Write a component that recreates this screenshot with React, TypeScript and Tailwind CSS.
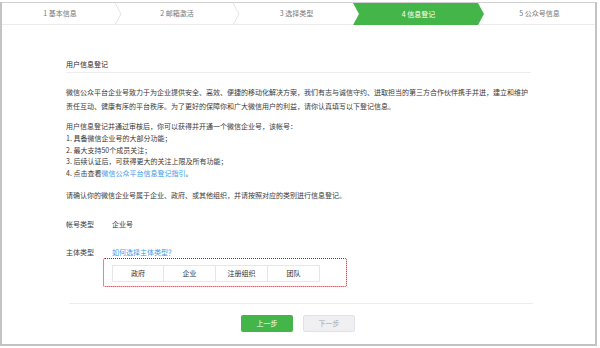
import React from 'react';

const font = { fontFamily: '"Noto Sans CJK SC", "Noto Sans", sans-serif' };

const Chevron: React.FC = () => (
  <svg className="absolute right-[-4px] top-0 z-10" width="8" height="22" viewBox="0 0 8 22">
    <path d="M1 0 L7 11 L1 22" fill="none" stroke="#e4e4e4" strokeWidth="1" />
  </svg>
);

const StepBar: React.FC = () => (
  <div className="flex h-[22px] border-b border-[#ececec] text-[7px] text-[#777] shrink-0">
    <div className="relative w-[116px] flex items-center justify-center">
      1 基本信息
      <Chevron />
    </div>
    <div className="relative w-[118px] flex items-center justify-center">
      2 邮箱激活
      <Chevron />
    </div>
    <div className="w-[117px] pl-[4px] flex items-center justify-center">3 选择类型</div>
    <div className="relative z-20 w-[131px] mr-[-6px] h-[22px] bg-[#44b549] text-white flex items-center justify-center [clip-path:polygon(0_0,125px_0,131px_50%,125px_100%,0_100%,6px_50%)]">
      4 信息登记
    </div>
    <div className="flex-1 pl-[6px] flex items-center justify-center">5 公众号信息</div>
  </div>
);

const App: React.FC = () => {
  return (
    <div className="w-[600px] h-[348px] bg-white pt-[2px] pb-[2px] pr-[3px]" style={font}>
      <div className="h-full border-2 border-t border-[#c3c3c3] border-t-[#d0d0d0] flex flex-col">
        <StepBar />

        <div className="ml-[64px] w-[465px] text-[7px] text-[#3a3a3a]">
          <div className="mt-[33px] h-[12px] leading-[12px] text-[#2a2a2a]">用户信息登记</div>
          <div className="mt-[2px] border-t border-[#ededed]" />

          <p className="mt-[13px] leading-[13.5px]">
            微信公众平台企业号致力于为企业提供安全、高效、便捷的移动化解决方案，我们有志与诚信守约、进取担当的第三方合作伙伴携手并进，建立和维护责任互动、健康有序的平台秩序。为了更好的保障你和广大微信用户的利益，请你认真填写以下登记信息。
          </p>

          <div className="mt-[8px] leading-[11.8px]">
            <p>用户信息登记并通过审核后，你可以获得并开通一个微信企业号，该帐号：</p>
            <p>1. 具备微信企业号的大部分功能；</p>
            <p>2. 最大支持50个成员关注；</p>
            <p>3. 后续认证后，可获得更大的关注上限及所有功能；</p>
            <p>
              4. 点击查看<span className="text-[#459ae9]">微信公众平台信息登记指引</span>。
            </p>
          </div>

          <p className="mt-[9px] leading-[12px]">请确认你的微信企业号属于企业、政府、或其他组织，并请按照对应的类别进行信息登记。</p>

          <div className="mt-[17px] flex leading-[12px]">
            <span className="w-[46px]">帐号类型</span>
            <span>企业号</span>
          </div>

          <div className="mt-[16px] flex leading-[12px]">
            <span className="w-[46px]">主体类型</span>
            <span className="text-[#459ae9]">如何选择主体类型？</span>
          </div>

          <div className="ml-[37px] w-[244px] h-[29px] border border-dotted border-[#e60012] rounded-[2px] pl-[8px] pt-[6px]">
            <div className="flex text-[#333]">
              {['政府', '企业', '注册组织', '团队'].map((t, i) => (
                <div
                  key={t}
                  className={
                    'w-[52px] h-[17px] flex items-center justify-center border border-[#e6e6e6] bg-white ' +
                    (i > 0 ? 'border-l-0' : '')
                  }
                >
                  {t}
                </div>
              ))}
            </div>
          </div>
        </div>

        <div className="mt-[16px] ml-[67px] w-[464px] border-t border-[#ededed]" />

        <div className="mt-[11px] flex justify-center gap-[10px] pr-[1px] text-[7px]">
          <button className="w-[52px] h-[17px] bg-[#44b549] text-white rounded-[2px]">上一步</button>
          <button className="w-[52px] h-[17px] bg-[#f0f0f2] border border-[#e2e2e6] text-[#a8a8a8] rounded-[2px]">
            下一步
          </button>
        </div>
      </div>
    </div>
  );
};

export default App;
